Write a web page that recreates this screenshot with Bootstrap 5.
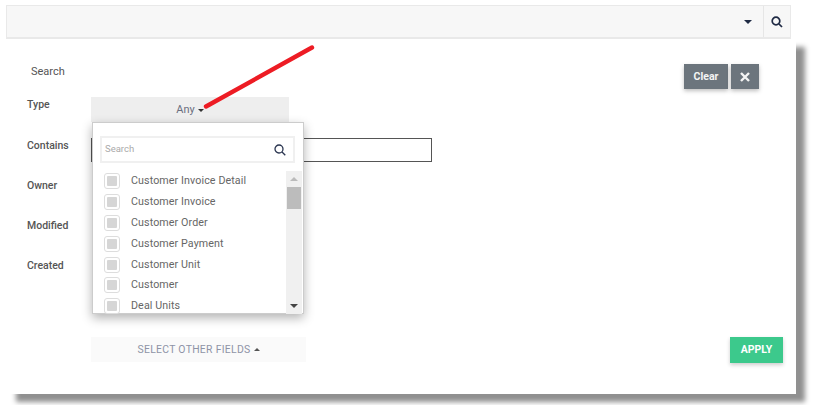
<!DOCTYPE html>
<html lang="en"><head><meta charset="utf-8"><title>Search</title>
<link href="https://cdn.jsdelivr.net/npm/bootstrap@5.3.0/dist/css/bootstrap.min.css" rel="stylesheet">
<style>
body{background:#fff;font-family:Roboto,"Liberation Sans",sans-serif;font-size:11px;color:#555;position:relative;width:813px;height:405px;overflow:hidden}
.topstrip{margin:5px 0 0 6px;width:785px;height:34px;background:#f7f7f7;border:1px solid #e9e9e9;border-bottom-width:2px}
.topcaret{width:0;height:0;border-left:4px solid transparent;border-right:4px solid transparent;border-top:4px solid #1f2a44;margin-right:11px}
.topsearch{width:27px;border-left:1px solid #e6e6e6}
.sheet{margin-left:7px;width:789px;height:355px;background:#fff;box-shadow:9px 8px 5px #909090;padding:26px 37px 0 20px;position:relative}
.sheethead{height:32px}
.searchtitle{margin:0 0 0 4px;color:#555;line-height:14px}
.btn-dark-soft{background:#6c757d;color:#f4f4f4;font-weight:700;font-size:10.5px;height:25px;border:0;border-radius:0;padding:0;box-shadow:0 2px 4px rgba(0,0,0,.25);margin-left:3px;margin-top:-1px}
.btn-clear{width:44px}.btn-x{width:28px}
.fieldrow{height:40px}
.fieldlabel{width:64px;color:#555;font-weight:500;font-size:10.5px;line-height:14px;padding-top:1px}
.fieldrow.lowlabel .fieldlabel{padding-top:2px}
.anybtn{width:198px;height:25px;background:#eee;font-size:11px;color:#6b6f80;line-height:25px}
.caretdn{display:inline-block;width:0;height:0;border-left:3.5px solid transparent;border-right:3.5px solid transparent;border-top:3.5px solid #333;margin-left:3px;vertical-align:middle}
.containsbox{width:341px;height:24px;border:1px solid #555;background:#fff;margin-top:1px}
.floatmenu{position:absolute;left:85px;top:83px;width:212px;height:192px;background:#fff;border:1px solid #ccc;box-shadow:0 4px 10px rgba(0,0,0,.3);z-index:3;padding:13px 8px 0 7px}
.menusearch{width:195px;height:27px;border:2px solid #f0f0f0;padding:0 7px 0 3px;color:#aaa;font-size:9.5px}
.menubody{margin-top:8px;height:143px;margin-right:-7px}
.menulist{width:186px;padding-left:4px;overflow:hidden}
.menuitem{height:20.8px;gap:11px;color:#666;font-size:10.7px;letter-spacing:.1px;white-space:nowrap}
.tick{flex:none;width:16px;height:16px;border:1px solid #ddd;border-radius:3px;padding:2px}
.tick span{display:block;width:10px;height:10px;background:#d6d6d6;border-radius:1px}
.fakescroll{width:16px;background:#f0f0f0;margin-left:auto}
.thumb{height:22px;background:#bcbcbc;margin:6px 1px 0}
.sb-up{width:0;height:0;border-left:4px solid transparent;border-right:4px solid transparent;border-bottom:4px solid #bbb;margin:6px auto 0}
.sb-dn{width:0;height:0;border-left:4px solid transparent;border-right:4px solid transparent;border-top:4px solid #444;margin:0 auto 6px}
.footrow{margin-top:40px;padding-left:64px}
.otherbtn{width:215px;height:25px;background:#fafafa;color:#8e93a6;font-size:10.4px;letter-spacing:.3px}
.caretup{display:inline-block;width:0;height:0;border-left:3.5px solid transparent;border-right:3.5px solid transparent;border-bottom:3.5px solid #555;margin-left:3px;vertical-align:middle}
.applybtn{width:53px;height:26px;background:#3cc98c;color:#fff;font-weight:700;font-size:10.5px;border:0;border-radius:0;padding:0;box-shadow:0 2px 4px rgba(0,0,0,.2);margin-right:-24px}
.pointer{position:absolute;left:0;top:0;z-index:5;pointer-events:none}
</style></head>
<body>
<div class="topstrip d-flex justify-content-end align-items-center">
  <span class="topcaret"></span>
  <div class="topsearch h-100 d-flex align-items-center justify-content-center">
    <svg width="12" height="12" viewBox="0 0 12 12" fill="none" stroke="#1f2a44" stroke-width="1.7"><circle cx="5" cy="5" r="3.8"/><path d="M8 8l3 3"/></svg>
  </div>
</div>
<div class="sheet">
  <div class="sheethead d-flex justify-content-between">
    <p class="searchtitle">Search</p>
    <div class="d-flex">
      <button class="btn btn-dark-soft btn-clear">Clear</button>
      <button class="btn btn-dark-soft btn-x d-flex align-items-center justify-content-center" aria-label="Close">
        <svg width="10" height="10" viewBox="0 0 10 10" stroke="#f4f4f4" stroke-width="2.4"><path d="M1 1l8 8M9 1l-8 8"/></svg>
      </button>
    </div>
  </div>
  <div class="fieldrow d-flex"><div class="fieldlabel">Type</div><div class="anybtn text-center">Any<span class="caretdn"></span></div></div>
  <div class="fieldrow lowlabel d-flex"><div class="fieldlabel">Contains</div><div class="containsbox"></div></div>
  <div class="fieldrow lowlabel d-flex"><div class="fieldlabel">Owner</div></div>
  <div class="fieldrow lowlabel d-flex"><div class="fieldlabel">Modified</div></div>
  <div class="fieldrow lowlabel d-flex"><div class="fieldlabel">Created</div></div>
  <div class="footrow d-flex justify-content-between">
    <div class="otherbtn d-flex align-items-center justify-content-center">SELECT OTHER FIELDS<span class="caretup"></span></div>
    <button class="btn applybtn">APPLY</button>
  </div>
  <div class="floatmenu">
    <div class="menusearch d-flex align-items-center justify-content-between">
      <span>Search</span>
      <svg width="12" height="12" viewBox="0 0 12 12" fill="none" stroke="#2a3550" stroke-width="1.3"><circle cx="5" cy="5" r="4"/><path d="M8 8l3.3 3.3"/></svg>
    </div>
    <div class="menubody d-flex">
      <div class="menulist">
        <div class="menuitem d-flex align-items-center"><div class="tick"><span></span></div>Customer Invoice Detail</div>
        <div class="menuitem d-flex align-items-center"><div class="tick"><span></span></div>Customer Invoice</div>
        <div class="menuitem d-flex align-items-center"><div class="tick"><span></span></div>Customer Order</div>
        <div class="menuitem d-flex align-items-center"><div class="tick"><span></span></div>Customer Payment</div>
        <div class="menuitem d-flex align-items-center"><div class="tick"><span></span></div>Customer Unit</div>
        <div class="menuitem d-flex align-items-center"><div class="tick"><span></span></div>Customer</div>
        <div class="menuitem d-flex align-items-center"><div class="tick"><span></span></div>Deal Units</div>
      </div>
      <div class="fakescroll d-flex flex-column">
        <div class="sb-up"></div>
        <div class="thumb"></div>
        <div class="sb-dn mt-auto"></div>
      </div>
    </div>
  </div>
</div>
<svg class="pointer" width="813" height="405"><path d="M312 47.5L206 106.5" stroke="#ed1c24" stroke-width="4.4" stroke-linecap="round"/></svg>
</body></html>
